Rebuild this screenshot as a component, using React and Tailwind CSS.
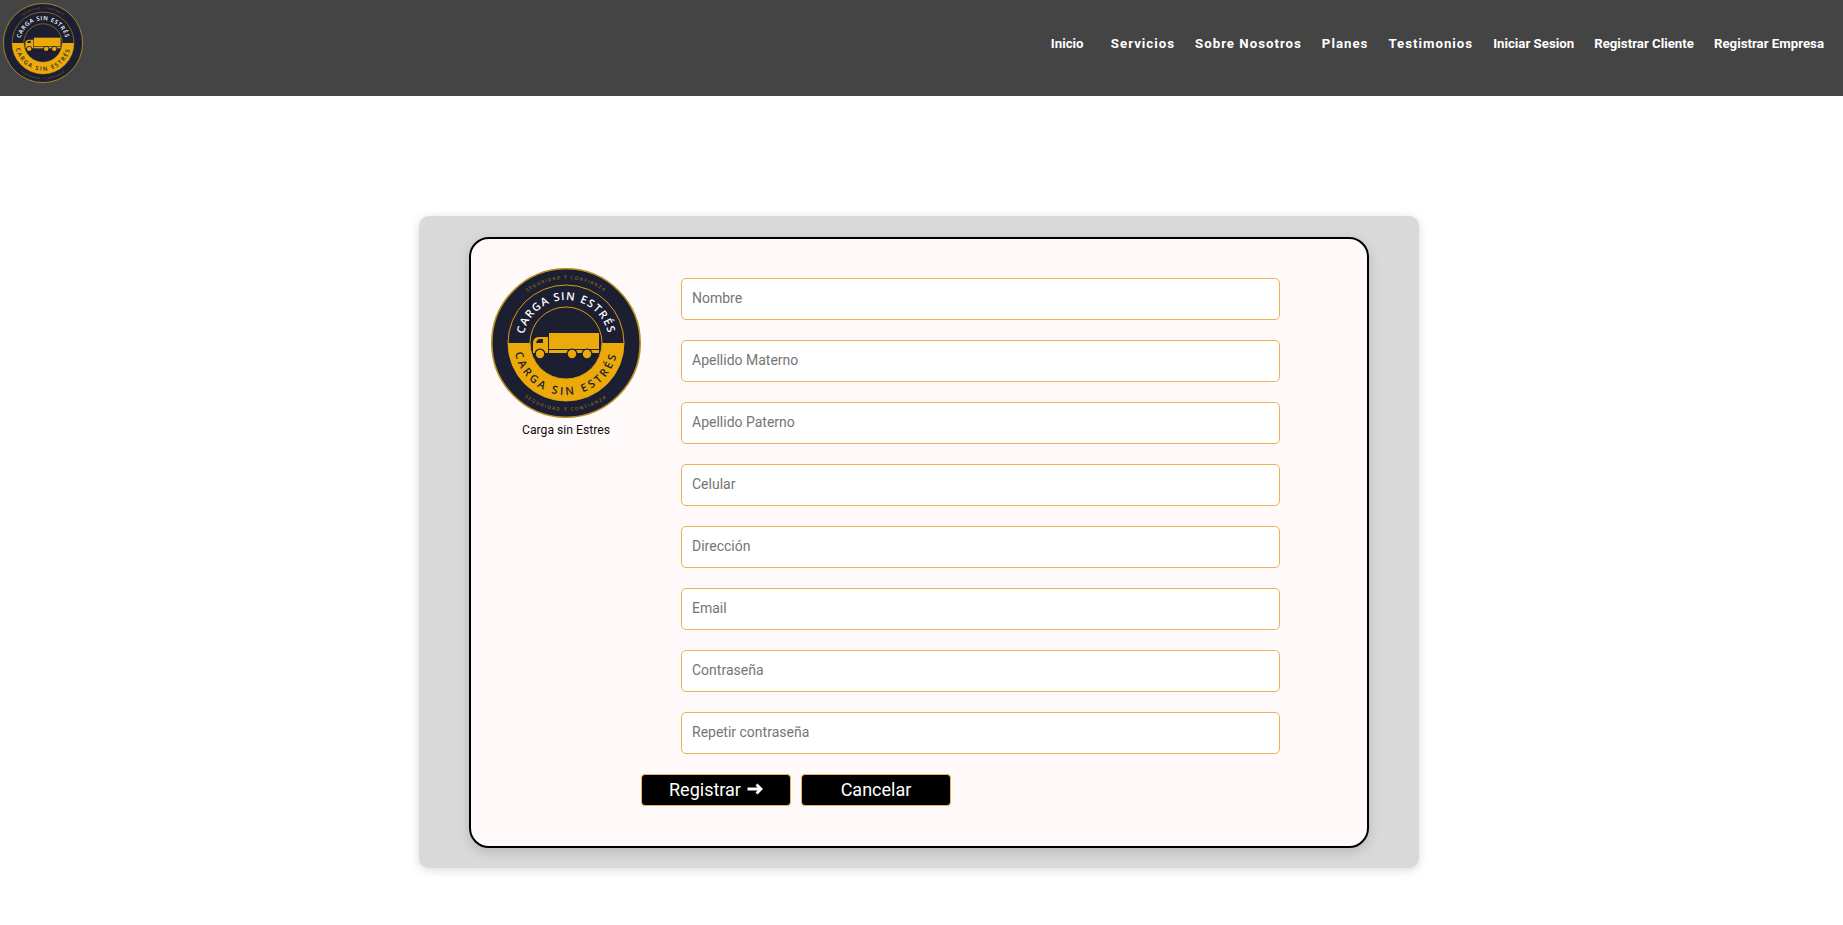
import React from 'react';

const roboto = { fontFamily: 'Roboto, sans-serif' };

// round badge, used in the header and on the form
const Logo = ({ id, size }) => (
  <svg width={size} height={size} viewBox="0 0 150 150" className="block">
    <defs>
      <path id={`${id}-top`} d="M 32 75 A 43 43 0 0 1 118 75" />
      <path id={`${id}-bot`} d="M 23 75 A 52 52 0 0 0 127 75" />
      <path id={`${id}-outtop`} d="M 11 75 A 64 64 0 0 1 139 75" />
      <path id={`${id}-outbot`} d="M 7 75 A 68 68 0 0 0 143 75" />
    </defs>
    <circle cx="75" cy="75" r="74.2" fill="#1c1e32" stroke="#b8901f" strokeWidth="1.6" />
    <circle cx="75" cy="75" r="58" fill="none" stroke="#d89c10" strokeWidth="1" />
    <path d="M 17 75 A 58 58 0 0 0 133 75 Z" fill="#eba90a" />
    <circle cx="75" cy="75" r="36" fill="#1c1e32" stroke="#d89c10" strokeWidth="1" />
    <text fontFamily="Open Sans, sans-serif" fontSize="11" fontWeight="600" fill="#ffffff" letterSpacing="1.2">
      <textPath href={`#${id}-top`} startOffset="50%" textAnchor="middle">CARGA SIN ESTRÉS</textPath>
    </text>
    <text fontFamily="Open Sans, sans-serif" fontSize="11" fontWeight="600" fill="#1c1e32" letterSpacing="2.8">
      <textPath href={`#${id}-bot`} startOffset="50%" textAnchor="middle">CARGA SIN ESTRÉS</textPath>
    </text>
    <text fontFamily="Open Sans, sans-serif" fontSize="4.5" fill="#b8901f" letterSpacing="1.35">
      <textPath href={`#${id}-outtop`} startOffset="50%" textAnchor="middle">SEGURIDAD Y CONFIANZA</textPath>
    </text>
    <text fontFamily="Open Sans, sans-serif" fontSize="4.5" fill="#b8901f" letterSpacing="1.6">
      <textPath href={`#${id}-outbot`} startOffset="50%" textAnchor="middle">SEGURIDAD Y CONFIANZA</textPath>
    </text>
    {/* truck */}
    <rect x="58" y="65" width="50" height="16" fill="#eba90a" />
    <path d="M 42 85 V 74 Q 43 69 48 69 H 57 V 85 Z" fill="#eba90a" />
    <path d="M 45 75 Q 46 71 49 71 H 52 V 75 Z" fill="#1c1e32" />
    <rect x="58" y="82" width="50" height="3" fill="#eba90a" />
    <circle cx="49" cy="86" r="5.5" fill="#1c1e32" />
    <circle cx="49" cy="86" r="4.2" fill="#eba90a" />
    <circle cx="81" cy="86" r="5.5" fill="#1c1e32" />
    <circle cx="81" cy="86" r="4.2" fill="#eba90a" />
    <circle cx="96" cy="86" r="5.5" fill="#1c1e32" />
    <circle cx="96" cy="86" r="4.2" fill="#eba90a" />
  </svg>
);

const navLinks = [
  { label: 'Inicio', cls: 'w-[40px]' },
  { label: 'Servicios', cls: 'tracking-[1px]' },
  { label: 'Sobre Nosotros', cls: 'tracking-[1px]' },
  { label: 'Planes', cls: 'tracking-[1px]' },
  { label: 'Testimonios', cls: 'tracking-[1px]' },
  { label: 'Iniciar Sesion', cls: '' },
  { label: 'Registrar Cliente', cls: '' },
  { label: 'Registrar Empresa', cls: '' },
];

const fields = [
  'Nombre',
  'Apellido Materno',
  'Apellido Paterno',
  'Celular',
  'Dirección',
  'Email',
  'Contraseña',
  'Repetir contraseña',
];

const App = () => {
  return (
    <div className="min-h-[925px] bg-white" style={roboto}>
      <header className="h-[96px] bg-[#444444] flex justify-between pl-[3px] pr-[19px]">
        <div className="pt-[3px]">
          <Logo id="nav" size={80} />
        </div>
        <nav className="flex gap-[20px] pt-[36px]">
          {navLinks.map((l) => (
            <a key={l.label} className={`text-white font-bold text-[13.25px] leading-[15px] ${l.cls}`}>
              {l.label}
            </a>
          ))}
        </nav>
      </header>

      <main className="pt-[120px] pl-[419px]">
        <div className="w-[1000px] h-[652px] bg-[#d9d9d9] rounded-[10px] shadow-[0_2px_10px_rgba(0,0,0,0.15)] pt-[21px] pl-[50px]">
          <div className="w-[900px] h-[611px] bg-[#fff9f9] border-2 border-black rounded-[20px] shadow-[0_4px_12px_rgba(0,0,0,0.15)] pt-[29px] pl-[20px] flex">
            <div className="w-[150px] flex flex-col items-center">
              <Logo id="form" size={150} />
              <span className="mt-[5px] text-[12.2px] leading-[15px] text-[#111111]">Carga sin Estres</span>
            </div>
            <div className="ml-[40px] pt-[10px]">
              <div className="flex flex-col gap-[20px]">
                {fields.map((f) => (
                  <input
                    key={f}
                    type="text"
                    placeholder={f}
                    className="w-[599px] h-[42px] bg-white border border-[#ecb05a] rounded-[5px] px-[10px] pb-[2px] text-[14px] placeholder:text-[#757575] outline-none"
                  />
                ))}
              </div>
              <div className="flex gap-[10px] mt-[20px] -ml-[40px]">
                <button className="w-[150px] h-[32px] pb-[2px] bg-black border border-[#ecb05a] rounded-[4px] text-white text-[18px] flex items-center justify-center gap-[6px]">
                  Registrar
                  <svg width="16" height="12" viewBox="0 0 16 12" fill="none" stroke="currentColor" strokeWidth="2.8" strokeLinejoin="miter">
                    <path d="M0.5 6H13.5M9.5 1.5 14 6 9.5 10.5" />
                  </svg>
                </button>
                <button className="w-[150px] h-[32px] pb-[2px] bg-black border border-[#ecb05a] rounded-[4px] text-white text-[18px]">
                  Cancelar
                </button>
              </div>
            </div>
          </div>
        </div>
      </main>
    </div>
  );
};

export default App;
